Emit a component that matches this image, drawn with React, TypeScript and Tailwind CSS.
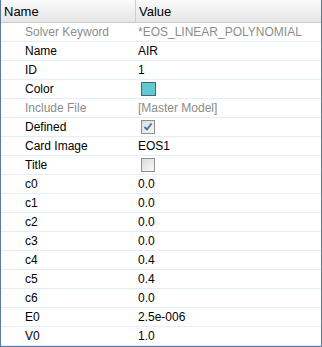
import React from 'react';

interface Row {
  label: string;
  value?: string;
  kind?: 'text' | 'color' | 'check';
  checked?: boolean;
  muted?: boolean;
}

const rows: Row[] = [
  { label: 'Solver Keyword', value: '*EOS_LINEAR_POLYNOMIAL', muted: true },
  { label: 'Name', value: 'AIR' },
  { label: 'ID', value: '1' },
  { label: 'Color', kind: 'color' },
  { label: 'Include File', value: '[Master Model]', muted: true },
  { label: 'Defined', kind: 'check', checked: true },
  { label: 'Card Image', value: 'EOS1' },
  { label: 'Title', kind: 'check', checked: false },
  { label: 'c0', value: '0.0' },
  { label: 'c1', value: '0.0' },
  { label: 'c2', value: '0.0' },
  { label: 'c3', value: '0.0' },
  { label: 'c4', value: '0.4' },
  { label: 'c5', value: '0.4' },
  { label: 'c6', value: '0.0' },
  { label: 'E0', value: '2.5e-006' },
  { label: 'V0', value: '1.0' },
];

const CheckBox: React.FC<{ checked?: boolean }> = ({ checked }) => (
  <div className="w-[14px] h-[14px] border border-[#8f8f8f] bg-gradient-to-br from-[#dcdcdc] to-[#f8f8f8] flex items-center justify-center">
    {checked && (
      <svg width="10" height="10" viewBox="0 0 10 10">
        <path d="M1.5 5 L4 7.5 L8.5 1.5" fill="none" stroke="#3a6fa8" strokeWidth="1.8" />
      </svg>
    )}
  </div>
);

const App: React.FC = () => {
  return (
    <div
      className="w-[322px] h-[347px] bg-white border-x border-b border-[#5a78a6] overflow-hidden text-[12px] leading-none"
      style={{ fontFamily: '"Liberation Sans", Arial, sans-serif' }}
    >
      <div className="flex h-[23px] bg-gradient-to-b from-[#fbfbfb] to-[#e6e6e6] border-b border-[#c9c9c9] text-[13px] text-black">
        <div className="w-[135px] border-r border-[#cfcfcf] pl-[3px] flex items-center">Name</div>
        <div className="flex-1 pl-[3px] flex items-center">Value</div>
      </div>
      {rows.map(r => (
        <div key={r.label} className="flex h-[19px] border-b border-[#e4edf6]">
          <div className={`w-[136px] pl-[24px] flex items-center ${r.muted ? 'text-[#8c8c8c]' : 'text-black'}`}>
            {r.label}
          </div>
          <div className={`flex-1 pl-[1px] flex items-center ${r.muted ? 'text-[#8c8c8c]' : 'text-black'}`}>
            {r.kind === 'color' ? (
              <div className="ml-[3px] w-[15px] h-[14px] border border-[#3d6b73] bg-[#62c8d2]" />
            ) : r.kind === 'check' ? (
              <div className="ml-[3px]">
                <CheckBox checked={r.checked} />
              </div>
            ) : (
              r.value
            )}
          </div>
        </div>
      ))}
    </div>
  );
};

export default App;
